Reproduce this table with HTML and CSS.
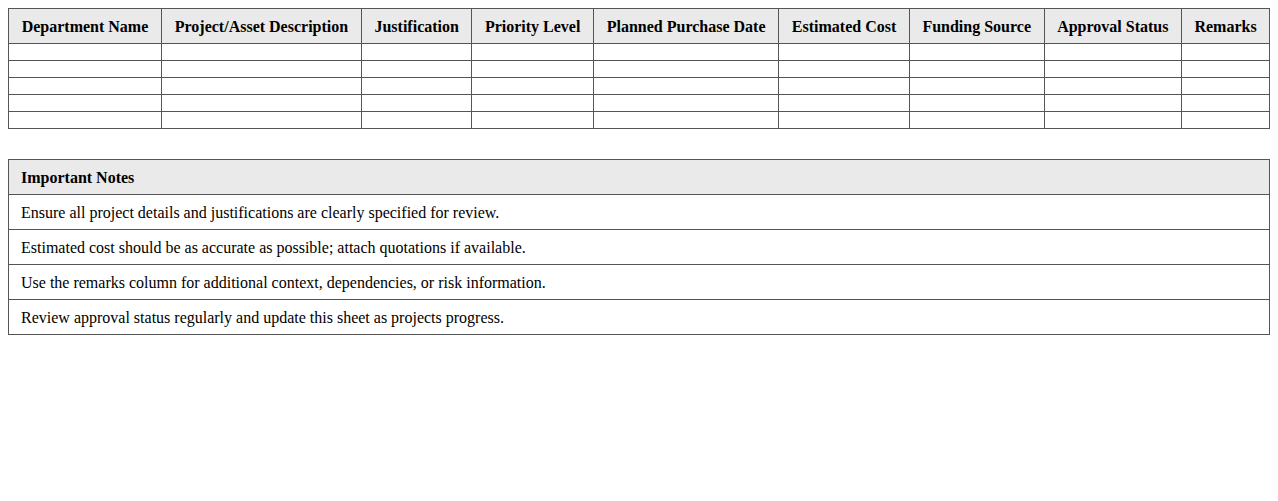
FILE: index.html
```html
<!DOCTYPE html>
<html>
<head>
<meta charset="utf-8">
<link rel="stylesheet" href="styles.css">
</head>
<body>
<table class="sheet">
  <thead>
    <tr>
      <th>Department Name</th>
      <th>Project/Asset Description</th>
      <th>Justification</th>
      <th>Priority Level</th>
      <th>Planned Purchase Date</th>
      <th>Estimated Cost</th>
      <th>Funding Source</th>
      <th>Approval Status</th>
      <th>Remarks</th>
    </tr>
  </thead>
  <tbody>
    <tr><td></td><td></td><td></td><td></td><td></td><td></td><td></td><td></td><td></td></tr>
    <tr><td></td><td></td><td></td><td></td><td></td><td></td><td></td><td></td><td></td></tr>
    <tr><td></td><td></td><td></td><td></td><td></td><td></td><td></td><td></td><td></td></tr>
    <tr><td></td><td></td><td></td><td></td><td></td><td></td><td></td><td></td><td></td></tr>
    <tr><td></td><td></td><td></td><td></td><td></td><td></td><td></td><td></td><td></td></tr>
  </tbody>
</table>

<table class="notes">
  <thead>
    <tr><th>Important Notes</th></tr>
  </thead>
  <tbody>
    <tr><td>Ensure all project details and justifications are clearly specified for review.</td></tr>
    <tr><td>Estimated cost should be as accurate as possible; attach quotations if available.</td></tr>
    <tr><td>Use the remarks column for additional context, dependencies, or risk information.</td></tr>
    <tr><td>Review approval status regularly and update this sheet as projects progress.</td></tr>
  </tbody>
</table>
</body>
</html>
```
FILE: styles.css
```css
body {
  margin: 8px;
  background: #fff;
  font-family: "Liberation Serif", "Times New Roman", serif;
  font-size: 16px;
  color: #000;
}

table {
  width: 100%;
  border-collapse: collapse;
}

th, td {
  border: 1px solid #555;
  padding: 8px 12px;
  line-height: 18px;
  text-align: left;
}

th:not(:empty),
td:not(:empty) {
  padding-top: 9px;
  padding-bottom: 7px;
}

th {
  background: #eaeaea;
  font-weight: bold;
}

.sheet th {
  text-align: center;
}

.notes {
  margin-top: 30px;
}
```
